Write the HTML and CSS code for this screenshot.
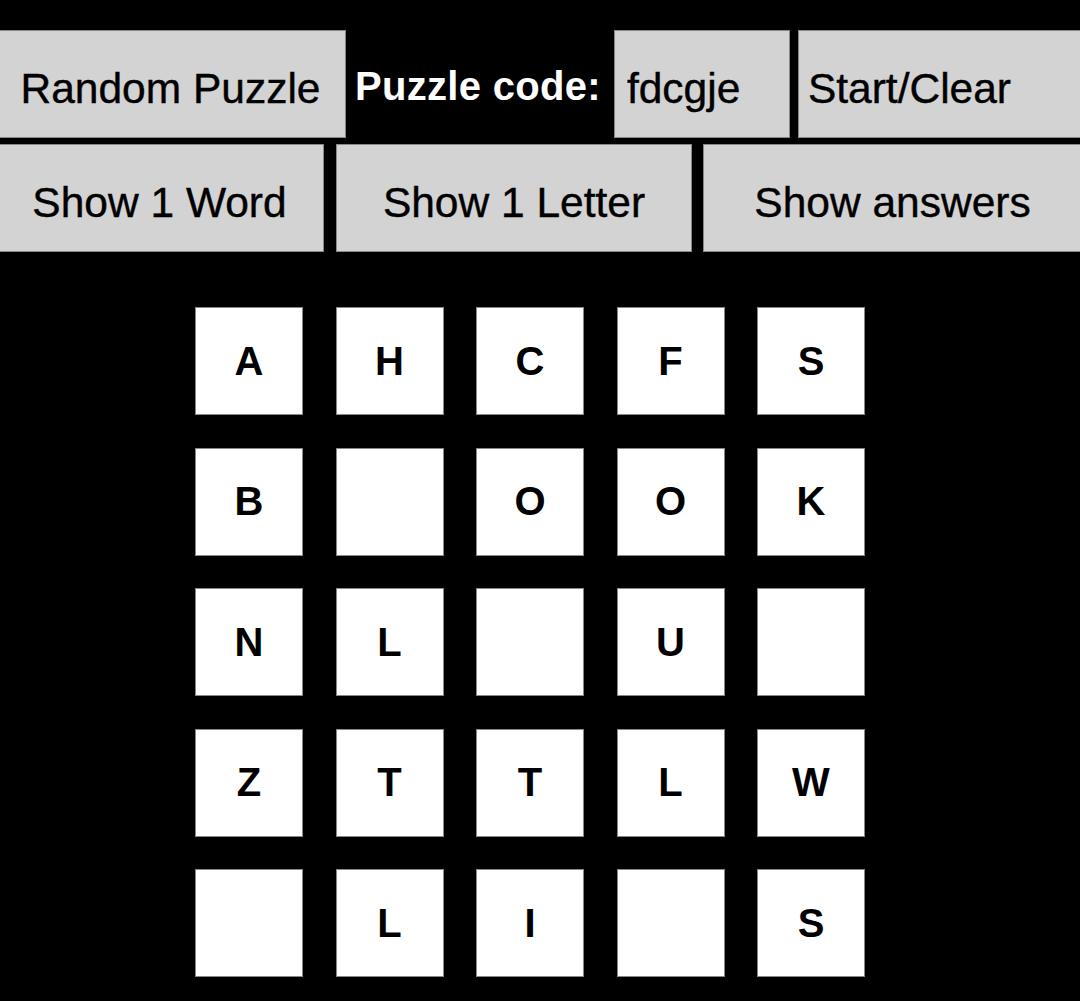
FILE: index.html
```html
<!DOCTYPE html>
<html lang="en">
<head>
    <meta charset="UTF-8">
    <meta name="viewport" content="width=device-width, initial-scale=1.0">
    <title>Word Grid Puzzle</title>
    <link rel="stylesheet" href="styles.css">
</head>
<body>

    <div class="toolbar">
        <div class="row">
            <button class="btn btn-random">Random Puzzle</button>
            <label class="code-label" for="code">Puzzle code:</label>
            <input type="text" id="code" class="code-input" value="fdcgje">
            <button class="btn btn-start">Start/Clear</button>
        </div>
        <div class="row">
            <button class="btn btn-word">Show 1 Word</button>
            <button class="btn btn-letter">Show 1 Letter</button>
            <button class="btn btn-answers">Show answers</button>
        </div>
    </div>

    <!-- 5x5 letter board -->
    <div class="board">
        <div class="cell">A</div>
        <div class="cell">H</div>
        <div class="cell">C</div>
        <div class="cell">F</div>
        <div class="cell">S</div>

        <div class="cell">B</div>
        <div class="cell"></div>
        <div class="cell">O</div>
        <div class="cell">O</div>
        <div class="cell">K</div>

        <div class="cell">N</div>
        <div class="cell">L</div>
        <div class="cell"></div>
        <div class="cell">U</div>
        <div class="cell"></div>

        <div class="cell">Z</div>
        <div class="cell">T</div>
        <div class="cell">T</div>
        <div class="cell">L</div>
        <div class="cell">W</div>

        <div class="cell"></div>
        <div class="cell">L</div>
        <div class="cell">I</div>
        <div class="cell"></div>
        <div class="cell">S</div>
    </div>

</body>
</html>
```

FILE: styles.css
```css
body {
    margin: 0;
    background-color: #000;
    font-family: "Liberation Sans", Arial, sans-serif;
    overflow: hidden;
}
.toolbar {
    padding-top: 30px;
    margin-left: -5px;
    width: 1087px;
}
.row {
    display: flex;
    height: 108px;
}
.row + .row {
    margin-top: 6px;
}
.btn, .code-input {
    box-sizing: border-box;
    height: 100%;
    margin: 0;
    padding: 10px 0 0;
    background-color: #d3d3d3;
    border: 1px solid #888;
    border-radius: 0;
    color: #000;
    font-family: "Liberation Sans", Arial, sans-serif;
    font-size: 42.5px;
    -webkit-text-stroke: 0.4px #000;
}
.btn-random {
    width: 351px;
}
.code-label {
    display: flex;
    align-items: center;
    margin: 0 13px 0 9px;
    padding-top: 4px;
    color: #fff;
    font-weight: bold;
    font-size: 40px;
    letter-spacing: 0.3px;
}
.code-input {
    width: 176px;
    padding-left: 12px;
}
.btn-start {
    flex: 1;
    margin-left: 8px;
    padding-left: 9px;
    text-align: left;
}
.btn-word {
    width: 329px;
}
.btn-letter {
    width: 356px;
    margin-left: 12px;
}
.btn-answers {
    flex: 1;
    margin-left: 11px;
}
.board {
    display: grid;
    grid-template-columns: repeat(5, 108px);
    grid-auto-rows: 108px;
    gap: 32.5px;
    margin: 55px 0 0 195px;
}
.cell {
    display: flex;
    align-items: center;
    justify-content: center;
    background-color: #fff;
    border: 1px solid #888;
    font-weight: bold;
    font-size: 40px;
}
```
